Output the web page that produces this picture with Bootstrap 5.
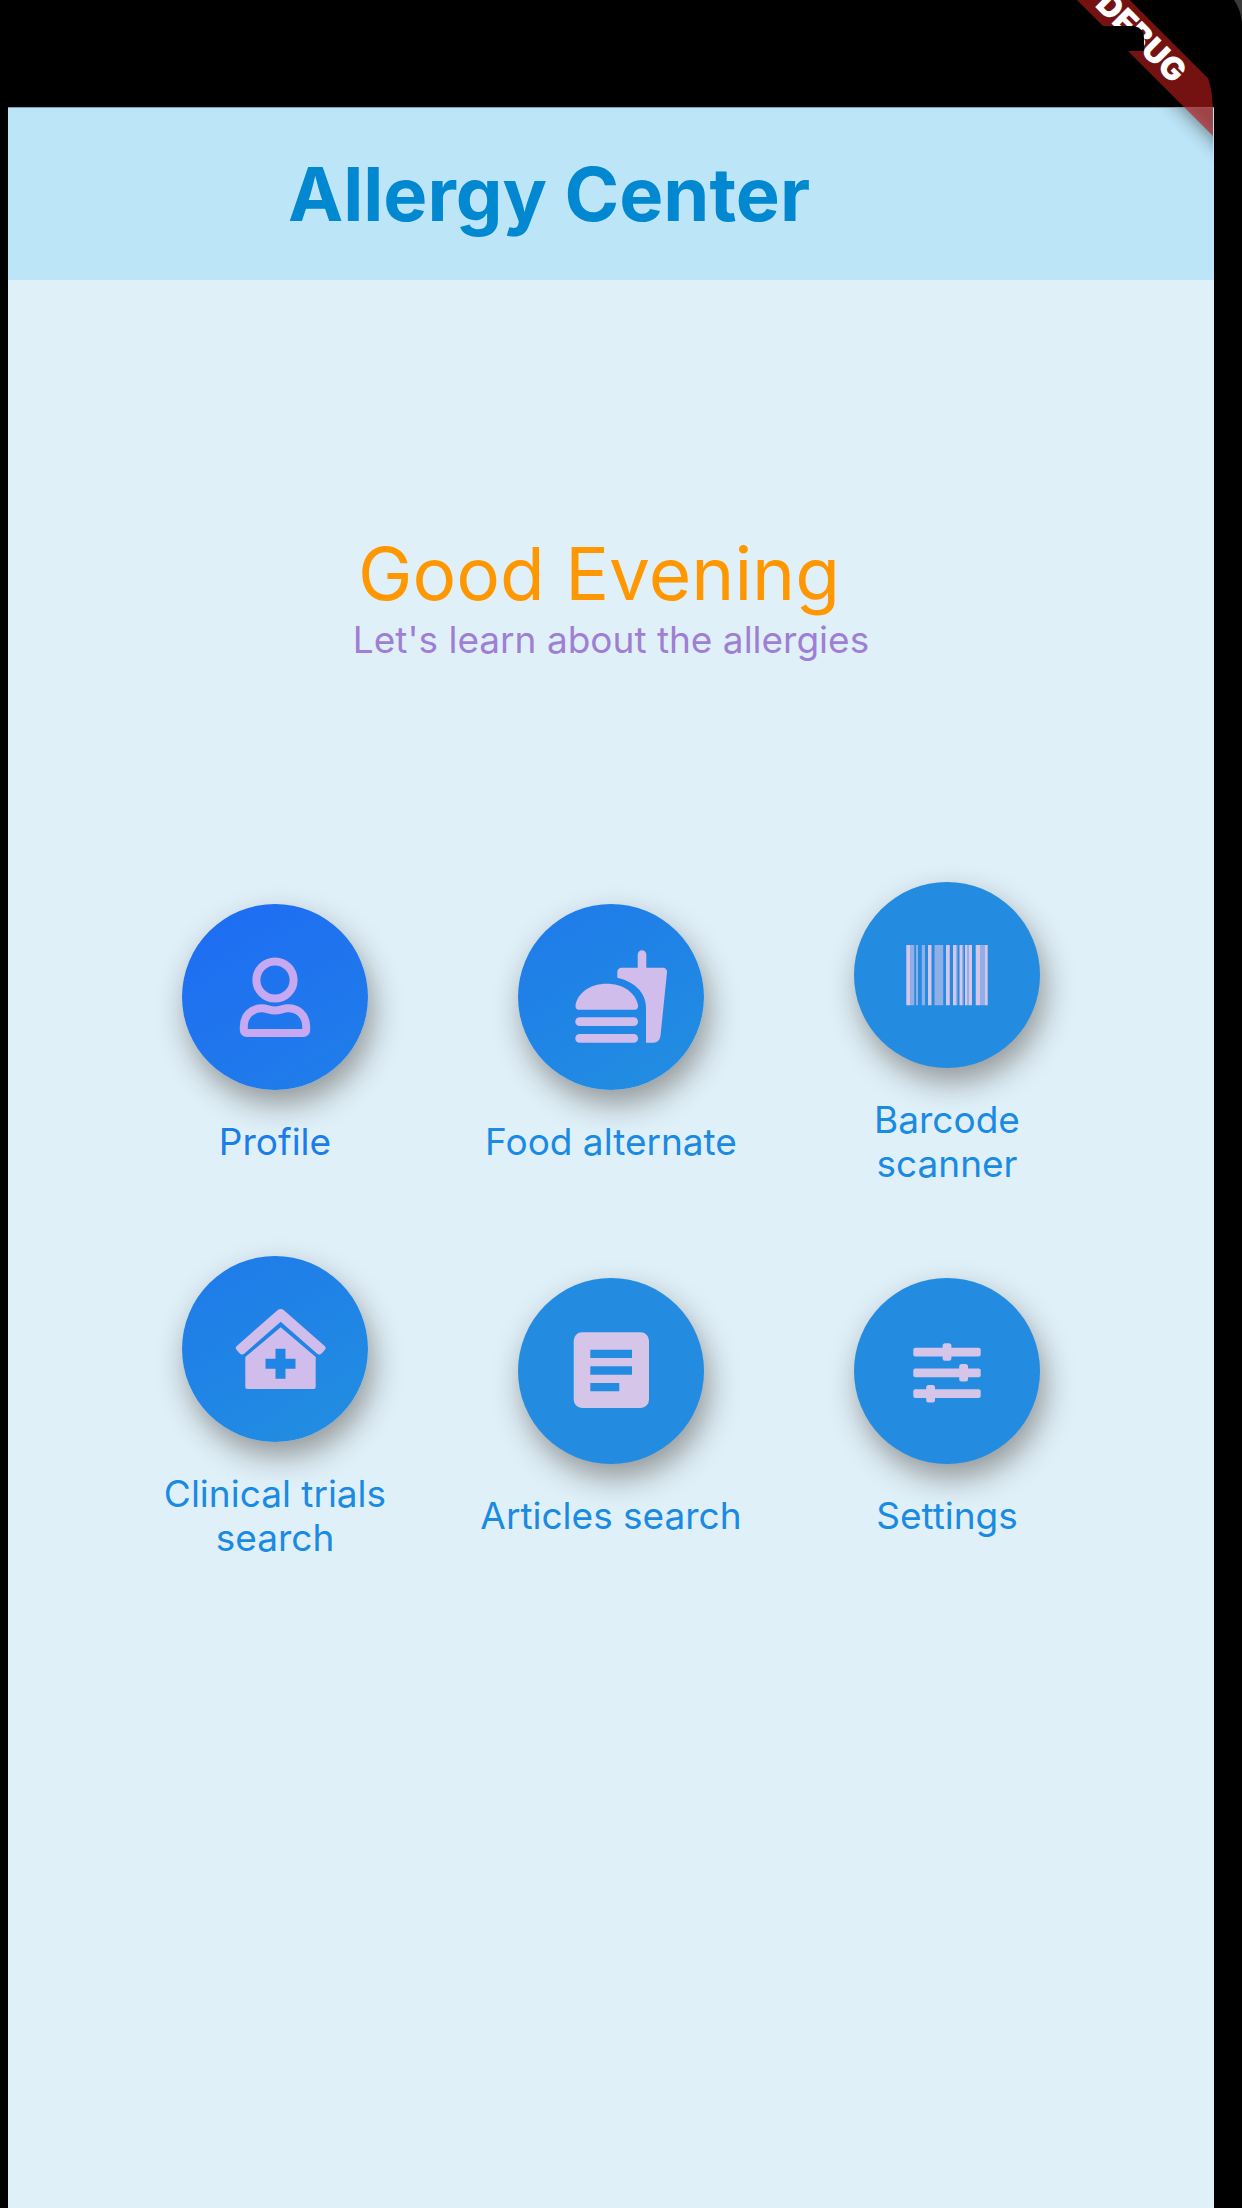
<!DOCTYPE html>
<html lang="en">
<head>
<meta charset="utf-8">
<meta name="viewport" content="width=device-width, initial-scale=1">
<title>Allergy Center</title>
<link href="https://cdn.jsdelivr.net/npm/bootstrap@5.3.0/dist/css/bootstrap.min.css" rel="stylesheet">
<style>
  body { background: #000; font-family: Inter, Roboto, sans-serif; }
  .device { padding: 0 28px 0 8px; }
  .status-strip { height: 107px; }
  .screen { background: #e0f0f9; }
  .app-header { background: #bce5f7; height: 173px; padding-right: 124px; border-top: 1px solid #7f9fae; }
  .app-title { color: #0288d1; font-size: 74px; line-height: 88px; font-weight: 700; }
  .greeting { padding-top: 250px; }
  .greeting-title { color: #ff9800; font-size: 73px; line-height: 88px; font-weight: 400; padding-right: 24px; }
  .greeting-text { color: #9f7fd3; font-size: 37px; line-height: 44px; }
  .menu { padding: 220px 99px 0; row-gap: 70px; }
  .tile { font-size: 37px; line-height: 44px; gap: 30px; padding: 0 32px; color: #1a8ae2; }
  .tile-disc { width: 186px; height: 186px; background: #238ce1; color: #d5c5e9; box-shadow: 5px 14px 30px rgba(30, 20, 10, .4); }
  .tile-first { color: #1b7de8; }
  .tile-first .tile-disc { background: linear-gradient(150deg, #1e6ef2 15%, #207de9 90%); color: #c6a9f2; }
  .tile-early .tile-disc { background: linear-gradient(150deg, #1f7de9 15%, #218ce1 85%); color: #d0bdec; }
  .tile-disc svg, .ribbon { display: block; }
  .ribbon { pointer-events: none; }
  .ribbon text { font: 900 32px Inter, sans-serif; }
</style>
<script src="https://cdn.jsdelivr.net/npm/bootstrap@5.3.0/dist/js/bootstrap.bundle.min.js"></script>
</head>
<body>
<div class="device position-relative min-vh-100 d-flex flex-column">
  <div class="status-strip flex-shrink-0"></div>
  <div class="screen flex-grow-1">
    <header class="app-header d-flex align-items-center justify-content-center">
      <h1 class="app-title m-0">Allergy Center</h1>
    </header>
    <main>
      <section class="greeting text-center">
        <h2 class="greeting-title m-0">Good Evening</h2>
        <p class="greeting-text m-0">Let's learn about the allergies</p>
      </section>
      <nav class="menu row row-cols-3 g-0 align-items-center" aria-label="Main menu">
        <div class="col">
          <button type="button" class="tile tile-first w-100 border-0 bg-transparent d-flex flex-column align-items-center">
            <span class="tile-disc rounded-circle">
              <svg width="186" height="186" viewBox="0 0 186 186" fill="none" stroke="currentColor" stroke-width="8" aria-hidden="true"><circle cx="93" cy="76" r="18.6"/><path d="M61.800 123C61.800 111 70 104.300 80 104.300c5 0 7.500 2.300 13 2.300s8-2.300 13-2.300c10 0 18.200 6.700 18.200 18.700v3a3 3 0 0 1-3 3H64.800a3 3 0 0 1-3-3z"/></svg>
            </span>
            <span>Profile</span>
          </button>
        </div>
        <div class="col">
          <button type="button" class="tile tile-early w-100 border-0 bg-transparent d-flex flex-column align-items-center">
            <span class="tile-disc rounded-circle">
              <svg width="186" height="186" viewBox="0 0 186 186" fill="currentColor" aria-hidden="true"><path d="M61 105.700c-2.500 0-4-2-3.500-4.500C60 88 73 79.700 88.700 79.700S117.500 88 120 101.200c.5 2.500-1 4.500-3.500 4.500z"/><rect x="57.300" y="113.300" width="62.700" height="8.700" rx="4.300"/><rect x="57.300" y="130" width="62.700" height="8.700" rx="4.300"/><path d="M119.700 63.700V50.600a4.300 4.300 0 0 1 8.600 0v13.100h16.500c2.800 0 4.500 2 4.200 4.600l-6.500 63.500c-.4 4.200-3.200 6.900-7 6.900H128v-35C128 87 114 77 99.300 73.800V68c0-2.500 1.800-4.300 4.300-4.300z"/></svg>
            </span>
            <span>Food alternate</span>
          </button>
        </div>
        <div class="col">
          <button type="button" class="tile w-100 border-0 bg-transparent d-flex flex-column align-items-center">
            <span class="tile-disc rounded-circle">
              <svg width="186" height="186" viewBox="0 0 186 186" fill="currentColor" aria-hidden="true"><path d="M52.300 63h4v60.300h-4zM74 63h3.500v60.300H74zM92 63h3.800v60.300H92zM99 63h3v60.300h-3zM105.500 63h2.500v60.300h-2.500zM111 63h2.500v60.300H111zM115 63h3v60.300h-3zM121.700 63h4.300v60.300h-4.300zM131 63h2.700v60.300H131z"/><path opacity=".62" d="M56.300 63h4v60.300h-4zM62 63h2v60.300h-2zM67.800 63h3.200v60.300h-3.200zM80.500 63h8.700v60.300h-8.700zM102 63h1.500v60.300H102zM108 63h1.500v60.300H108zM113.500 63h1.500v60.300h-1.500zM126 63h5v60.300h-5z"/></svg>
            </span>
            <span>Barcode scanner</span>
          </button>
        </div>
        <div class="col">
          <button type="button" class="tile tile-early w-100 border-0 bg-transparent d-flex flex-column align-items-center">
            <span class="tile-disc rounded-circle">
              <svg width="186" height="186" viewBox="0 0 186 186" fill="currentColor" aria-hidden="true"><path d="M95.500 54.200q3.200-2.400 6.400 0l41 36q1.600 1.800 0 3.600l-3 3.400q-2.500 2.400-5.200 0l-36-31.500-36 31.500q-2.700 2.400-5.200 0l-3-3.400q-1.600-1.800 0-3.600z"/><path fill-rule="evenodd" d="M98.700 71.300l35 29.700v30a2 2 0 0 1-2 2h-66.400a2 2 0 0 1-2-2v-30zM93.500 92.700v10h-10v10h10v10h10v-10h10v-10h-10v-10z"/></svg>
            </span>
            <span>Clinical trials search</span>
          </button>
        </div>
        <div class="col">
          <button type="button" class="tile w-100 border-0 bg-transparent d-flex flex-column align-items-center">
            <span class="tile-disc rounded-circle">
              <svg width="186" height="186" viewBox="0 0 186 186" fill="currentColor" aria-hidden="true"><path fill-rule="evenodd" d="M64 54.300h58.700a8.300 8.300 0 0 1 8.300 8.300v59.100a8.300 8.300 0 0 1-8.300 8.300H64a8.300 8.300 0 0 1-8.300-8.300V62.600a8.300 8.300 0 0 1 8.300-8.300zM72.300 71.700V80H114v-8.300zM72.300 88.300v8.400H114v-8.400zM72.300 105v8.300h29V105z"/></svg>
            </span>
            <span>Articles search</span>
          </button>
        </div>
        <div class="col">
          <button type="button" class="tile w-100 border-0 bg-transparent d-flex flex-column align-items-center">
            <span class="tile-disc rounded-circle">
              <svg width="186" height="186" viewBox="0 0 186 186" fill="currentColor" aria-hidden="true"><rect x="59.300" y="69.700" width="67.400" height="8.800" rx="2"/><rect x="59.300" y="90.500" width="67.400" height="8.800" rx="2"/><rect x="59.300" y="111.200" width="67.400" height="8.800" rx="2"/><rect x="88.600" y="65.300" width="8.800" height="17.500" rx="2.500"/><rect x="105.200" y="86.100" width="8.800" height="17.500" rx="2.500"/><rect x="72.200" y="106.900" width="8.800" height="17.500" rx="2.500"/></svg>
            </span>
            <span>Settings</span>
          </button>
        </div>
      </nav>
    </main>
  </div>
  <svg class="ribbon position-absolute top-0 end-0" width="192" height="190" viewBox="0 0 192 190" role="img" aria-label="Debug build">
    <defs>
      <clipPath id="glass"><path d="M0 0H80L158 78Q163 92 163 115V190H0z"/></clipPath>
      <clipPath id="below"><path d="M0 108H163V190H0z"/></clipPath>
      <filter id="soft" x="-30%" y="-30%" width="160%" height="160%"><feGaussianBlur stdDeviation="9"/></filter>
    </defs>
    <path d="M184 0H192V22Q190 8 184 0z" fill="#3a3a3a"/>
    <g clip-path="url(#below)"><path d="M27 4L80 4 190 114V167z" fill="#000" opacity=".42" filter="url(#soft)"/></g>
    <g clip-path="url(#glass)">
      <path d="M27 0H80L216 136V189z" fill="#b71c1c" fill-opacity=".63"/>
      <text transform="translate(92 37) rotate(45)" text-anchor="middle" y="12" fill="#fff">DEBUG</text>
    </g>
    <path d="M40 26H84Q94 28 94 38V51H40z" fill="#000"/>
  </svg>
</div>
</body>
</html>
